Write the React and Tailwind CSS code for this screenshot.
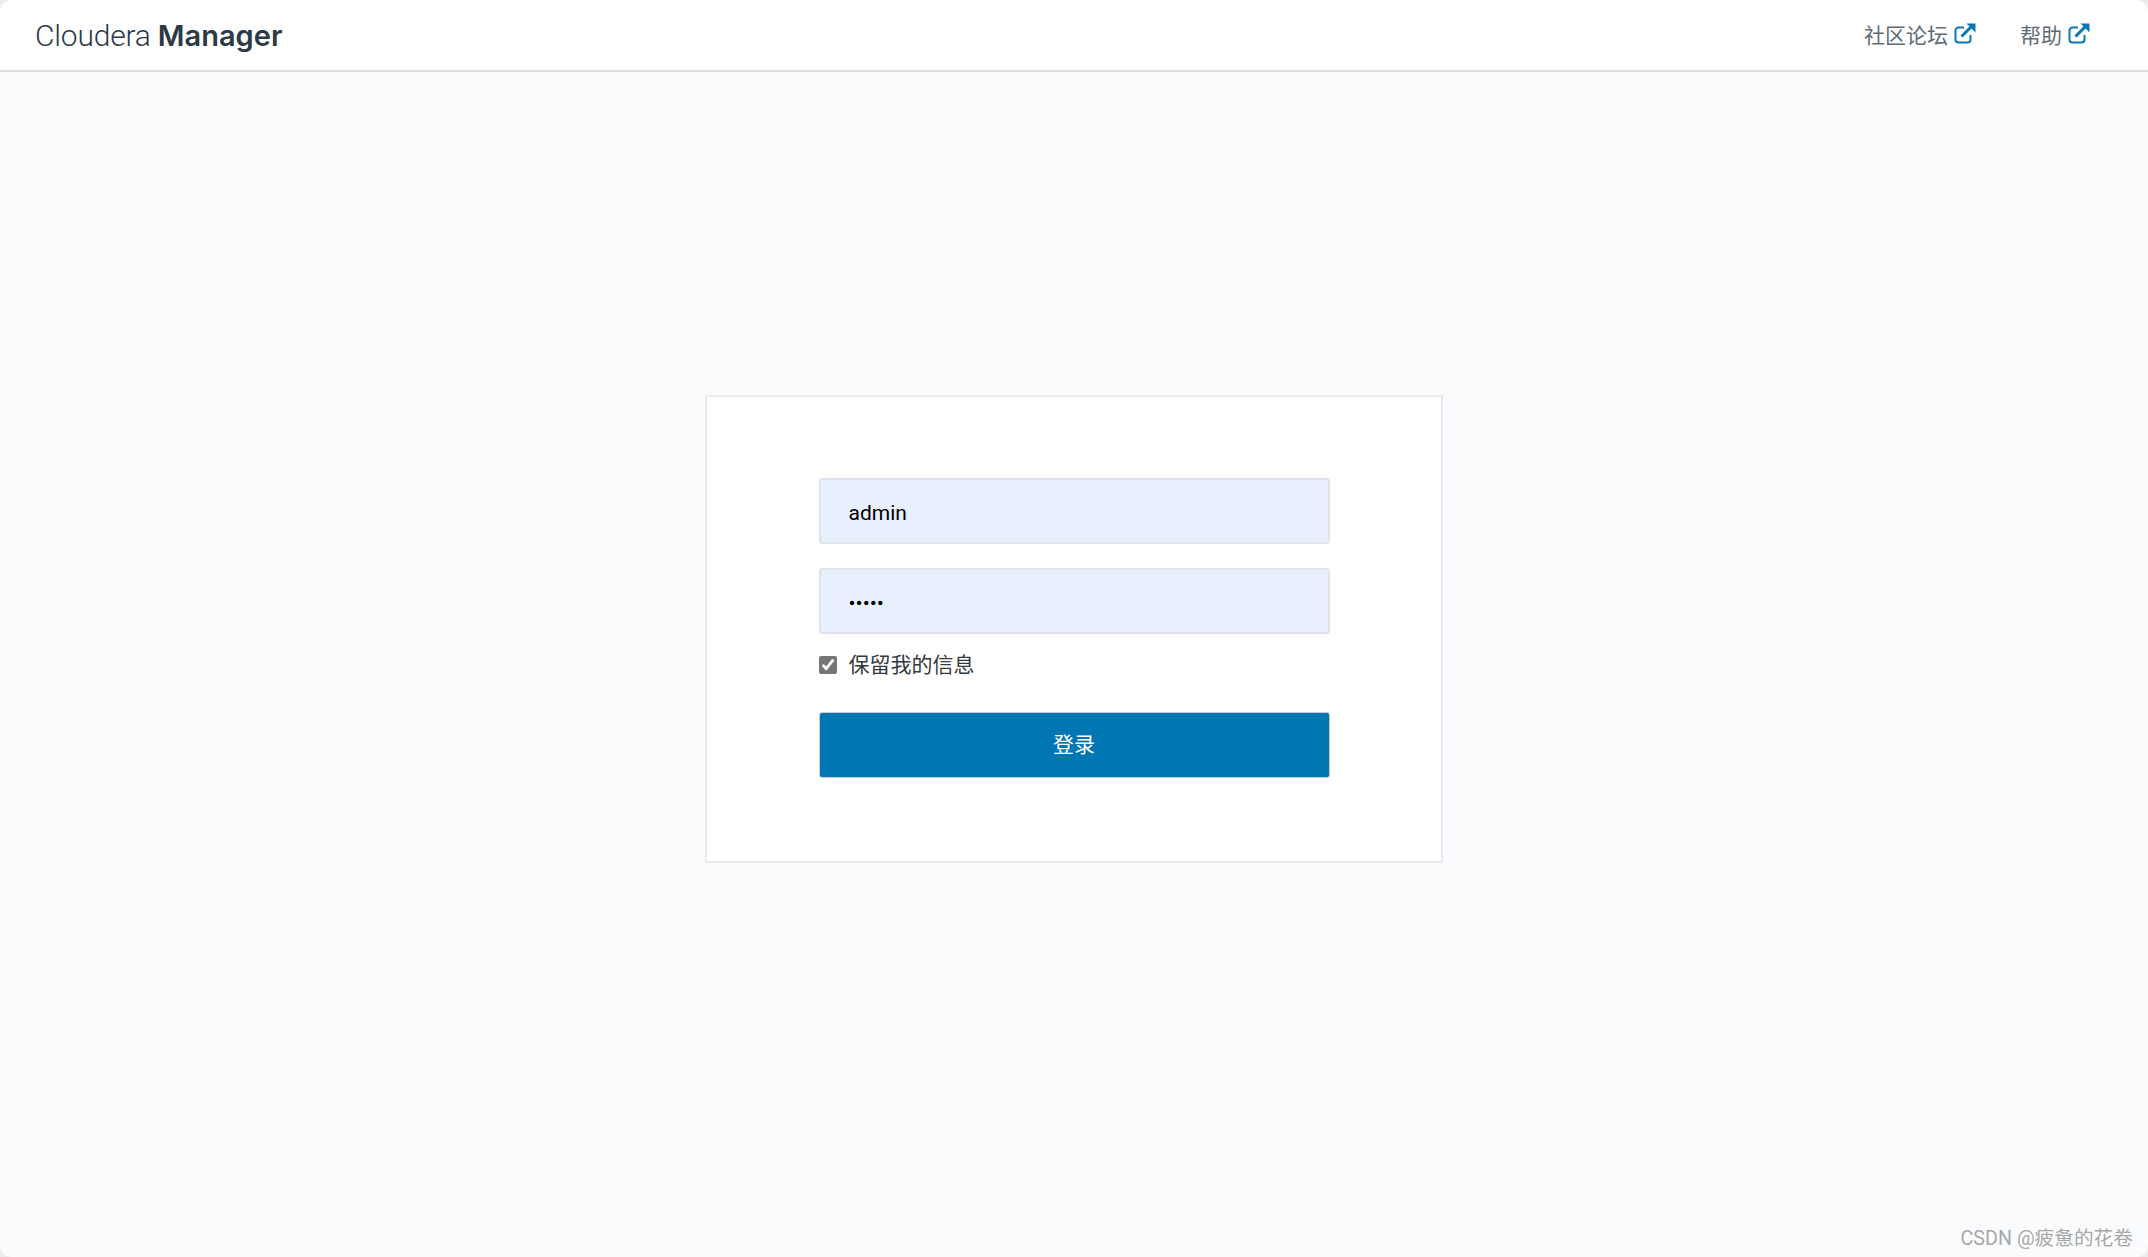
import React from "react";

const sans = "font-['Roboto','Noto_Sans_CJK_SC',sans-serif]";

function ExtIcon() {
  return (
    <svg width="22" height="21" viewBox="0 0 22 21" fill="none" className="text-[#0a78b4]">
      <path d="M10 4.5H4.5A3 3 0 0 0 1.5 7.5v9a3 3 0 0 0 3 3h9a3 3 0 0 0 3-3V12" stroke="currentColor" strokeWidth="2" />
      <path d="M7.5 13.5L17 4" stroke="currentColor" strokeWidth="3" />
      <path d="M12.5 0.5H21.5V9.5Z" fill="currentColor" />
    </svg>
  );
}

function NavLink({ label }) {
  return (
    <a className="flex items-center gap-[6px] text-[21px] leading-none text-[#5f6b75]">
      <span className="pt-[2px]">{label}</span>
      <span className="-mt-[4px]"><ExtIcon /></span>
    </a>
  );
}

export default function App() {
  return (
    <div className="h-[1257px] w-[2148px] bg-[#ececec]">
      <div className={`relative flex h-[1257px] w-[2148px] flex-col overflow-hidden rounded-[12px] bg-[#fafbfd] ${sans}`}>
        <header className="flex h-[72px] shrink-0 items-center justify-between border-b-2 border-[#dcdee0] bg-white pl-[35px] pr-[58px]">
          <div className="pt-[1px] text-[30px] leading-none text-[#2b3a45]">
            <span className="font-light tracking-[-0.2px]">Cloudera </span>
            <span className="font-['Inter',sans-serif] text-[29px] font-semibold">Manager</span>
          </div>
          <nav className="flex items-center gap-[44px]">
            <NavLink label="社区论坛" />
            <NavLink label="帮助" />
          </nav>
        </header>
        <main className="flex flex-1 justify-center pt-[323px]">
          <form className="flex h-[468px] w-[738px] flex-col items-center border-2 border-[#e8eaed] bg-white pt-[81px]">
            <div className="flex w-[511px] flex-col">
              <input
                readOnly
                defaultValue="admin"
                className="h-[66px] rounded-[3px] border-2 border-[#dfe3ec] bg-[#e8f0fe] px-[28px] pt-[3px] text-[21px] text-black outline-none"
              />
              <input
                readOnly
                type="password"
                defaultValue="admin"
                className="mt-[24px] h-[66px] rounded-[3px] border-2 border-[#dfe3ec] bg-[#e8f0fe] px-[28px] pt-[3px] text-[21px] text-black outline-none"
              />
              <label className="mt-[22px] flex h-[18px] items-center gap-[11px] text-[21px] leading-none text-[#333a40]">
                <input readOnly defaultChecked type="checkbox" className="m-0 h-[18px] w-[18px] accent-[#767676]" />
                <span className="pl-[1px] pt-[1px]">保留我的信息</span>
              </label>
              <button
                type="button"
                className="mt-[38px] h-[66px] rounded-[3px] border border-[#c9ced2] bg-[#0076b3] pt-[2px] text-[21px] text-white"
              >
                登录
              </button>
            </div>
          </form>
        </main>
        <div className="absolute bottom-[5px] right-[15px] text-[19.7px] leading-[26px] text-[#a8a8a8]">
          CSDN @疲惫的花卷
        </div>
      </div>
    </div>
  );
}
